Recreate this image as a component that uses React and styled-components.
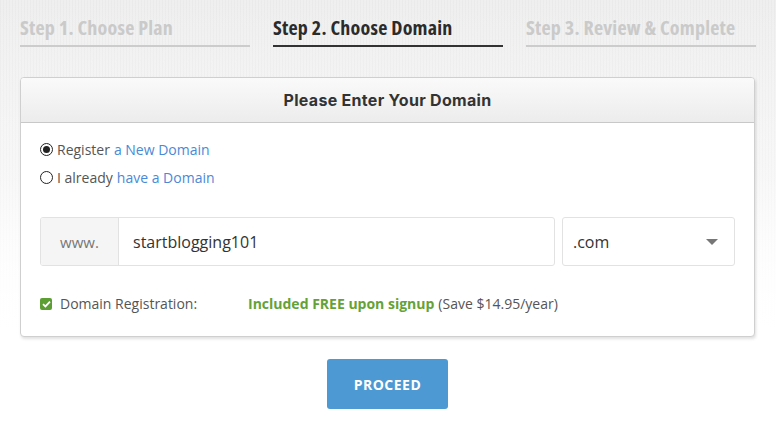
import styled, { createGlobalStyle } from 'styled-components';

const GlobalStyle = createGlobalStyle`
  html, body {
    margin: 0;
    padding: 0;
  }
  body {
    font-family: "Open Sans", "Liberation Sans", sans-serif;
    background:
      linear-gradient(180deg, rgba(255,255,255,0) 0%, rgba(255,255,255,0.3) 40%, #ffffff 78%),
      repeating-linear-gradient(90deg, rgba(0,0,0,0.02) 0 1px, transparent 1px 3px),
      linear-gradient(180deg, #efefef 0%, #f5f5f5 45%, #ffffff 80%);
    background-repeat: no-repeat;
    min-height: 425px;
  }
`;

const steps = [
  { id: 1, label: 'Step 1. Choose Plan', active: false },
  { id: 2, label: 'Step 2. Choose Domain', active: true },
  { id: 3, label: 'Step 3. Review & Complete', active: false },
];

const Page = styled.div`
  width: 776px;
  padding: 0 21px 0 20px;
  box-sizing: border-box;
`;

const StepBar = styled.div`
  display: grid;
  grid-template-columns: repeat(3, 230px);
  column-gap: 23px;
  padding-top: 15px;
`;

const Step = styled.div`
  font-family: "Open Sans", sans-serif;
  font-stretch: condensed;
  font-weight: 700;
  font-size: 20px;
  letter-spacing: 0.2px;
  line-height: 25px;
  white-space: nowrap;
  color: ${(p) => (p.$active ? '#2b2b2b' : '#cacaca')};
  padding-bottom: 5px;
  border-bottom: 2px solid ${(p) => (p.$active ? '#333333' : '#cccccc')};
`;

const Card = styled.div`
  margin-top: 30px;
  background: #fff;
  border: 1px solid #cfcfcf;
  border-radius: 4px;
  box-shadow: 1px 2px 3px rgba(0, 0, 0, 0.12);
  overflow: hidden;
`;

const CardHeader = styled.div`
  height: 44px;
  display: flex;
  align-items: center;
  justify-content: center;
  background: linear-gradient(180deg, #fafafa 0%, #ececec 100%);
  border-bottom: 1px solid #c8c8c8;
  font-family: Inter, "DejaVu Sans", sans-serif;
  font-weight: 700;
  font-size: 16px;
  letter-spacing: 0.3px;
  color: #333;
`;

const CardBody = styled.div`
  padding: 12px 19px 23px 19px;
`;

const RadioRow = styled.label`
  display: flex;
  align-items: center;
  height: 28px;
  font-size: 14px;
  color: #555;
`;

const RadioDot = styled.span`
  width: 11px;
  height: 11px;
  border: 1px solid #222;
  border-radius: 50%;
  margin-right: 4px;
  display: flex;
  align-items: center;
  justify-content: center;
  box-sizing: content-box;

  &::after {
    content: '';
    width: 7px;
    height: 7px;
    border-radius: 50%;
    background: ${(p) => (p.$checked ? '#222' : 'transparent')};
  }
`;

const Link = styled.a`
  color: #4a89d6;
  text-decoration: none;
  margin-left: 4px;
`;

const InputRow = styled.div`
  display: flex;
  gap: 7px;
  margin-top: 26px;
`;

const InputGroup = styled.div`
  flex: 1;
  display: flex;
  height: 49px;
  border: 1px solid #e2e2e2;
  border-radius: 3px;
  box-sizing: border-box;
  overflow: hidden;
`;

const Addon = styled.div`
  width: 77px;
  display: flex;
  align-items: center;
  justify-content: center;
  background: #f5f5f5;
  border-right: 1px solid #e2e2e2;
  color: #777;
  font-size: 15px;
`;

const TextInput = styled.div`
  flex: 1;
  display: flex;
  align-items: center;
  padding-left: 14px;
  font-size: 16px;
  color: #333;
`;

const Select = styled.div`
  width: 173px;
  height: 49px;
  box-sizing: border-box;
  border: 1px solid #e2e2e2;
  border-radius: 3px;
  display: flex;
  align-items: center;
  justify-content: space-between;
  padding: 0 16px 0 10px;
  font-size: 16px;
  color: #333;
`;

const Caret = styled.span`
  width: 0;
  height: 0;
  border-left: 6px solid transparent;
  border-right: 6px solid transparent;
  border-top: 6px solid #777;
`;

const RegRow = styled.div`
  display: flex;
  align-items: center;
  margin-top: 28px;
  font-size: 14px;
  color: #555;
`;

const CheckBox = styled.span`
  width: 12px;
  height: 12px;
  border-radius: 2px;
  background: #5c9e34;
  display: flex;
  align-items: center;
  justify-content: center;
  margin-right: 8px;
`;

const RegLabel = styled.span`
  width: 188px;
`;

const Free = styled.span`
  color: #65a235;
  font-weight: 700;
  margin-right: 4px;
`;

const Save = styled.span`
  font-size: 14px;
  color: #555;
`;

const ButtonWrap = styled.div`
  display: flex;
  justify-content: center;
  margin-top: 22px;
`;

const Button = styled.button`
  width: 121px;
  height: 50px;
  border: none;
  border-radius: 3px;
  background: #4d99d3;
  color: #fff;
  font-family: "Open Sans", sans-serif;
  font-weight: 700;
  font-size: 14px;
  letter-spacing: 0.5px;
  cursor: pointer;
`;

export default function App() {
  return (
    <>
      <GlobalStyle />
      <Page>
        <StepBar>
          {steps.map((s) => (
            <Step key={s.id} $active={s.active}>{s.label}</Step>
          ))}
        </StepBar>

        <Card>
          <CardHeader>Please Enter Your Domain</CardHeader>
          <CardBody>
            <RadioRow>
              <RadioDot $checked />
              Register<Link href="#">a New Domain</Link>
            </RadioRow>
            <RadioRow>
              <RadioDot />
              I already<Link href="#">have a Domain</Link>
            </RadioRow>

            <InputRow>
              <InputGroup>
                <Addon>www.</Addon>
                <TextInput>startblogging101</TextInput>
              </InputGroup>
              <Select>
                .com
                <Caret />
              </Select>
            </InputRow>

            <RegRow>
              <CheckBox>
                <svg width="9" height="8" viewBox="0 0 9 8">
                  <path d="M1 4.2 L3.4 6.4 L8 1.6" fill="none" stroke="#fff" strokeWidth="1.8" />
                </svg>
              </CheckBox>
              <RegLabel>Domain Registration:</RegLabel>
              <Free>Included FREE upon signup</Free>
              <Save>(Save $14.95/year)</Save>
            </RegRow>
          </CardBody>
        </Card>

        <ButtonWrap>
          <Button>PROCEED</Button>
        </ButtonWrap>
      </Page>
    </>
  );
}
